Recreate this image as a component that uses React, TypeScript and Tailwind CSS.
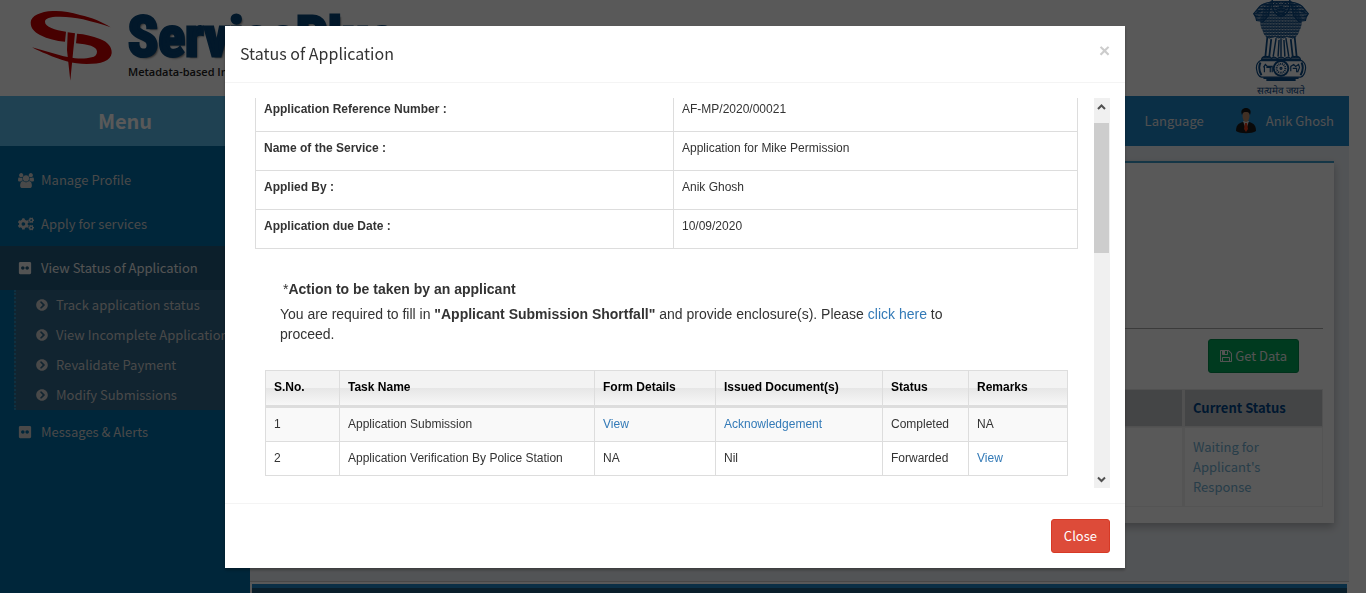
import { FaChevronCircleRight, FaCogs, FaFlickr } from "react-icons/fa";
import type { ReactNode } from "react";

const details = [
  ["Application Reference Number :", "AF-MP/2020/00021"],
  ["Name of the Service :", "Application for Mike Permission"],
  ["Applied By :", "Anik Ghosh"],
  ["Application due Date :", "10/09/2020"],
];

const submenu = [
  "Track application status",
  "View Incomplete Application",
  "Revalidate Payment",
  "Modify Submissions",
];

function UsersIcon() {
  return (
    <svg viewBox="0 0 1920 1792" className="h-[15px] w-4" fill="currentColor">
      <path d="M593 896q-162 5-265 128h-134q-82 0-138-40.5t-56-118.5q0-353 124-353 6 0 43.5 21t97.5 42.5 119 21.5q67 0 133-23-5 37-5 66 0 139 81 256zm1071 637q0 120-73 189.5t-194 69.5h-874q-121 0-194-69.5t-73-189.5q0-53 3.5-103.5t14-109 26.5-108.5 43-97.5 62-81 85.5-53.5 111.5-20q10 0 43 21.5t73 48 107 48 135 21.5 135-21.5 107-48 73-48 43-21.5q61 0 111.5 20t85.5 53.5 62 81 43 97.5 26.5 108.5 14 109 3.5 103.5zm-1024-1277q0 106-75 181t-181 75-181-75-75-181 75-181 181-75 181 75 75 181zm704 384q0 159-112.5 271.5t-271.5 112.5-271.5-112.5-112.5-271.5 112.5-271.5 271.5-112.5 271.5 112.5 112.5 271.5zm576 225q0 78-56 118.5t-138 40.5h-134q-103-123-265-128 81-117 81-256 0-29-5-66 66 23 133 23 59 0 119-21.5t97.5-42.5 43.5-21q124 0 124 353zm-128-609q0 106-75 181t-181 75-181-75-75-181 75-181 181-75 181 75 75 181z" />
    </svg>
  );
}

function FloppyIcon() {
  return (
    <svg viewBox="128 128 1536 1536" className="h-3 w-3" fill="currentColor">
      <path d="M512 1536h768v-384h-768v384zm896 0h128v-896q0-14-10-38.5t-20-34.5l-281-281q-10-10-34-20t-39-10v416q0 40-28 68t-68 28h-576q-40 0-68-28t-28-68v-416h-128v1280h128v-416q0-40 28-68t68-28h832q40 0 68 28t28 68v416zm-384-928v-320q0-13-9.5-22.5t-22.5-9.5h-192q-13 0-22.5 9.5t-9.5 22.5v320q0 13 9.5 22.5t22.5 9.5h192q13 0 22.5-9.5t9.5-22.5zm640 32v928q0 40-28 68t-68 28h-1344q-40 0-68-28t-28-68v-1344q0-40 28-68t68-28h928q40 0 88 20t76 48l280 280q28 28 48 76t20 88z" />
    </svg>
  );
}

function Logo() {
  return (
    <div className="flex items-start pt-2 pl-7">
      <svg viewBox="0 0 88 76" className="h-[76px] w-[88px] shrink-0" fill="#cc0000">
        <path d="M82.7 19.3C74 14 64 9.5 52 7 42 4 33 2.500 25 3 12 3.500 3 8 2.700 14.300 2.500 20 6 24 12 27c8 4 16 6 25 6.700L38 23.700C27 22 17 19 17 13.700 17 10 23 8.500 32 8.700c8 0 15 1 23 2.600 10 2.500 19 5 27.700 8z" />
        <path d="M4 39.300C9 42 13 44 18.700 46 32 52 45 56 58.700 56 73 56 83 53 83.700 45 84 39 80 34 72 31 64 28 57 26 49 25.700L48 35.300c12 1 21 3 21 8.400 0 3-2 5-5.300 5.600-5 1.500-11 1.500-16.700 1-8-1-15-3-22-5-7-2-14-4-21-6z" />
        <path d="M39.700 24.300L47 25.300 45.300 42 42.300 72.700 39 42z" />
      </svg>
      <div className="pt-1 pl-3">
        <div className="h-[50px] font-['Liberation_Sans_Narrow','Roboto_Condensed','Roboto',sans-serif] text-[56px] leading-[50px] font-bold text-[#06457a] [-webkit-text-stroke:3px_#06457a] [text-shadow:2px_2px_2px_#777]">
          ServicePlus
        </div>
        <div className="font-['Open_Sans',sans-serif] text-[11px] leading-5 font-semibold whitespace-nowrap text-[#222]">
          Metadata-based Integrated eService Delivery
        </div>
      </div>
    </div>
  );
}

function Emblem() {
  return (
    <div className="flex w-16 flex-col items-center">
      <svg viewBox="0 0 60 86" className="h-[86px] w-[60px]" fill="none" stroke="#0b4a87" strokeWidth="1.2">
        <defs>
          <pattern id="mane" width="3" height="3" patternUnits="userSpaceOnUse">
            <path d="M0 .5q1.500 2.500 3 0M-1.500 2q1.500 2.500 3 0M1.500 2q1.500 2.500 3 0" stroke="#0b4a87" strokeWidth="1.4" />
          </pattern>
        </defs>
        <path d="M21 1c-5 1-9 6-10 13-3 5-3 12 0 17 1 4 3 7 7 9l6-2 6 3 6-3 6 2c4-2 6-5 7-9 3-5 3-12 0-17C48 7 44 2 39 1z" fill="url(#mane)" stroke="none" />
        <path d="M20 2C14 3 9 4 7 8l-5 6 2 3 1 4 7 1 5-6zM40 2c6 1 11 2 13 6l5 6-2 3-1 4-7 1-5-6z" fill="url(#mane)" />
        <path d="M5 13l5-2M3 16l4 1M55 13l-5-2M57 16l-4 1M11 7l4 2M49 7l-4 2" strokeWidth="1.500" />
        <path d="M21 0v5c0 5 4 11 9 12 5-1 9-7 9-12V0" strokeWidth="1.500" />
        <path d="M23 4q3-3 5 0M32 4q3-3 5 0M24 8q3 3 6 1 3 2 6-1M25 11q5 5 10 0M28 7h4M26 14q4 3 8 0" strokeWidth="1.500" />
        <path d="M16 38l-2 20M20 40l-2 18M42 58l-2-18M46 58l-2-20" strokeWidth="1.800" />
        <path d="M25 39l-3 19M28 41l-1 17M30 41v17M33 41l1 17M35 39l3 19" strokeWidth="1.500" />
        <path d="M10 61q1-4 6-3 3-1 4 2 3-3 6 0 4-3 8 0 3-3 6 0 1-3 4-2 5-1 6 3z" fill="url(#mane)" />
        <path d="M9 62h42q5 3 4 9-1 7-5 8H10q-4-1-5-8-1-6 4-9z" />
        <path d="M9 64q-3 6 1 13M51 64q3 6-1 13" strokeWidth="2" />
        <circle cx="30" cy="70" r="7.500" strokeWidth="2" />
        <circle cx="30" cy="70" r="4.500" strokeDasharray="1 .8" strokeWidth="2" />
        <circle cx="30" cy="70" r="1" />
        <path d="M12 69l2-3 2 2h5v6m-2-5v5m-6-6v6m2-5h5M40 73v-5l3-2 2 2 3-2 1 3-2 5m-5-4h4v4" />
        <path d="M12 80h36M15 82h30" strokeWidth="2" />
      </svg>
      <span className="text-[10px] leading-3 whitespace-nowrap text-[#0b4a87]">सत्यमेव जयते</span>
    </div>
  );
}

function Avatar() {
  return (
    <svg viewBox="0 0 20 26" className="h-[26px] w-5">
      <path d="M0 23c0-5 2-8 7-9h6c5 1 7 4 7 9-4 3-16 3-20 0z" fill="#1b1b1b" />
      <path d="M7 13l3 9 3-9z" fill="#ddd" />
      <path d="M9 15h2l1 6-2 3-2-3z" fill="#e33b18" />
      <ellipse cx="10" cy="8" rx="3.500" ry="6" fill="#b98a68" />
      <path d="M6 7C4 2 7 0 10 0s6 2 4 7c-1-3-2-3-4-3S7 4 6 7z" fill="#151515" />
    </svg>
  );
}

function MenuItem({ icon, children, active }: { icon: ReactNode; children: ReactNode; active?: boolean }) {
  return (
    <a
      href="#"
      className={
        active
          ? "flex h-11 items-center gap-2 bg-[#23597b] pl-[18px] text-[#eee]"
          : "flex h-11 items-center gap-2 pl-[18px] text-[#d0d0d0]"
      }
    >
      <span className="w-[15px]">{icon}</span>
      {children}
    </a>
  );
}

function Sidebar() {
  return (
    <aside className="w-[250px] shrink-0 bg-[#006da6]">
      <h2 className="flex h-[50px] items-center justify-center bg-[#59baea] text-[20px] font-bold text-white">Menu</h2>
      <nav className="pt-3">
        <MenuItem icon={<UsersIcon />}>Manage Profile</MenuItem>
        <MenuItem icon={<FaCogs size={16} />}>Apply for services</MenuItem>
        <MenuItem icon={<FaFlickr size={14} />} active>View Status of Application</MenuItem>
        <ul className="ml-3.5 border-l-2 border-dotted border-[#2a8dbd] bg-[#32688b]">
          {submenu.map((label) => (
            <li key={label}>
              <a href="#" className="flex h-[30px] items-center gap-2 pl-5 whitespace-nowrap text-[#d0d0d0]">
                <FaChevronCircleRight size={12} />
                {label}
              </a>
            </li>
          ))}
        </ul>
        <MenuItem icon={<FaFlickr size={14} />}>Messages &amp; Alerts</MenuItem>
      </nav>
    </aside>
  );
}

function Page() {
  return (
    <div className="flex h-screen flex-col overflow-hidden bg-white pr-[17px]">
      <header className="flex h-24 shrink-0 justify-between pr-9">
        <Logo />
        <Emblem />
      </header>
      <div className="flex min-h-0 flex-1">
        <Sidebar />
        <div className="flex min-w-0 flex-1 flex-col bg-[#ecf0f5]">
          <div className="flex h-[50px] shrink-0 items-center justify-end bg-[#1f86c8] pr-[15px] text-[#e4e4e4]">
            <a href="#" className="mr-8">Language</a>
            <Avatar />
            <a href="#" className="ml-2.5">Anik Ghosh</a>
          </div>
          <main className="flex-1 px-[15px] pt-[15px]">
            <section className="border-t-2 border-[#3c9cc8] bg-white px-[11px] pb-4 shadow-[0_4px_8px_rgba(0,0,0,0.25)]">
              <div className="h-[166px] border-b border-[#aaa]" />
              <div className="flex justify-end pt-2.5 pr-6 pb-4">
                <button className="flex h-[34px] items-center gap-[3px] rounded-[3px] border border-[#008d4c] bg-[#00a65a] px-[11px] text-[#eee]">
                  <FloppyIcon />
                  Get Data
                </button>
              </div>
              <table className="w-full table-fixed border-separate border-spacing-0 text-left">
                <colgroup>
                  <col />
                  <col className="w-[140px]" />
                </colgroup>
                <thead>
                  <tr className="h-[38px]">
                    <th className="border border-[#e8e8e8] bg-[#c4c5c8]" aria-label="Application" />
                    <th className="border border-l-2 border-[#e8e8e8] bg-[#c4c5c8] px-2 font-semibold text-[#00478a]">Current Status</th>
                  </tr>
                </thead>
                <tbody>
                  <tr className="align-top">
                    <td className="border border-[#f0f0f0]" />
                    <td className="border border-l-2 border-[#f0f0f0] px-2 pt-[9px] pb-[9px]">
                      <a href="#" className="block w-20 text-[#72afd2]">Waiting for Applicant's Response</a>
                    </td>
                  </tr>
                </tbody>
              </table>
            </section>
          </main>
          <footer className="h-3 shrink-0 border-t border-[#ccc] bg-white px-0.5 pt-0.5">
            <div className="h-full border-t-4 border-[#1f86c8] bg-[#1c5878]" />
          </footer>
        </div>
      </div>
    </div>
  );
}

function ScrollBar() {
  return (
    <div className="flex w-4 shrink-0 flex-col bg-[#f0f0f0]" aria-hidden="true">
      <svg viewBox="0 0 16 25" className="h-[25px] w-4" fill="none" stroke="#505050" strokeWidth="2">
        <path d="M4 11L7.500 7.500l3.500 3.500" />
      </svg>
      <div className="mr-px h-[130px] bg-[#cdcdcd]" />
      <svg viewBox="0 0 16 16" className="mt-auto h-4 w-4" fill="none" stroke="#505050" strokeWidth="2">
        <path d="M4 5.500L7.500 9 11 5.500" />
      </svg>
    </div>
  );
}

const th = "border border-[#ddd] border-b-[3px] px-2 font-bold";
const td = "border border-[#ddd] px-2";
const link = "text-[#337ab7]";

function TaskTable() {
  return (
    <table className="w-full table-fixed border-collapse text-left text-[12px] leading-[17px] text-[#333]">
      <colgroup>
        <col className="w-[74px]" />
        <col className="w-[255px]" />
        <col className="w-[121px]" />
        <col className="w-[167px]" />
        <col className="w-[86px]" />
        <col />
      </colgroup>
      <thead>
        <tr className="h-9 bg-[linear-gradient(#f3f3f3_0%,#f3f3f3_50%,#e6e6e6_50%,#f8f8f8_100%)] text-black">
          <th className={th}>S.No.</th>
          <th className={th}>Task Name</th>
          <th className={th}>Form Details</th>
          <th className={th}>Issued Document(s)</th>
          <th className={th}>Status</th>
          <th className={th}>Remarks</th>
        </tr>
      </thead>
      <tbody>
        <tr className="h-[35px] bg-[#f9f9f9]">
          <td className={td}>1</td>
          <td className={td}>Application Submission</td>
          <td className={td}><a href="#" className={link}>View</a></td>
          <td className={td}><a href="#" className={link}>Acknowledgement</a></td>
          <td className={td}>Completed</td>
          <td className={td}>NA</td>
        </tr>
        <tr className="h-[34px]">
          <td className={td}>2</td>
          <td className={td}>Application Verification By Police Station</td>
          <td className={td}>NA</td>
          <td className={td}>Nil</td>
          <td className={td}>Forwarded</td>
          <td className={td}><a href="#" className={link}>View</a></td>
        </tr>
      </tbody>
    </table>
  );
}

function StatusDialog() {
  return (
    <div className="fixed inset-0 flex items-start justify-center bg-black/65 pr-4 pt-[26px]">
      <div role="dialog" aria-labelledby="dialog-title" className="w-[900px] bg-white text-[#333] shadow-[0_2px_3px_rgba(0,0,0,0.3)]">
        <div className="flex h-[57px] items-center justify-between border-b border-[#f4f4f4] px-[15px] pb-0.5">
          <h4 id="dialog-title" className="text-[16px]">Status of Application</h4>
          <button aria-label="Dismiss" className="pb-1 font-['Liberation_Sans',sans-serif] text-[19px] leading-5 font-bold text-[#ccc]">×</button>
        </div>
        <div className="flex p-[15px]">
          <div className="h-[390px] min-w-0 flex-1 overflow-hidden pr-4 pl-[15px] font-['Liberation_Sans',sans-serif]">
            <table className="w-full table-fixed border-collapse text-[12px] leading-[17px]">
              <colgroup>
                <col className="w-[418px]" />
                <col />
              </colgroup>
              <tbody>
                {details.map(([label, value], i) => (
                  <tr key={label} className={i === 0 ? "h-[33px] align-top" : "h-[39px] align-top"}>
                    <th className={i === 0 ? "border border-t-0 border-[#ddd] px-2 pt-[3px] text-left" : "border border-[#ddd] px-2 pt-2 text-left"}>{label}</th>
                    <td className={i === 0 ? "border border-t-0 border-[#ddd] px-2 pt-[3px]" : "border border-[#ddd] px-2 pt-2"}>{value}</td>
                  </tr>
                ))}
              </tbody>
            </table>
            <div className="pt-[30px] pr-[100px] pl-[25px] text-[14px] leading-5">
              <p className="pb-[5px] pl-[3px]">*<b>Action to be taken by an applicant</b></p>
              <p>
                You are required to fill in <b>"Applicant Submission Shortfall"</b> and provide enclosure(s). Please{" "}
                <a href="#" className={link}>click here</a> to proceed.
              </p>
            </div>
            <div className="px-2.5 pt-[26px]">
              <TaskTable />
            </div>
          </div>
          <ScrollBar />
        </div>
        <div className="flex justify-end border-t border-[#f4f4f4] p-[15px]">
          <button className="h-[34px] rounded-[3px] border border-[#d73925] bg-[#dd4b39] px-3 text-white">Close</button>
        </div>
      </div>
    </div>
  );
}

export default function App() {
  return (
    <div className="font-['Noto_Sans_CJK_SC',sans-serif] text-[13px] leading-5">
      <Page />
      <StatusDialog />
    </div>
  );
}
